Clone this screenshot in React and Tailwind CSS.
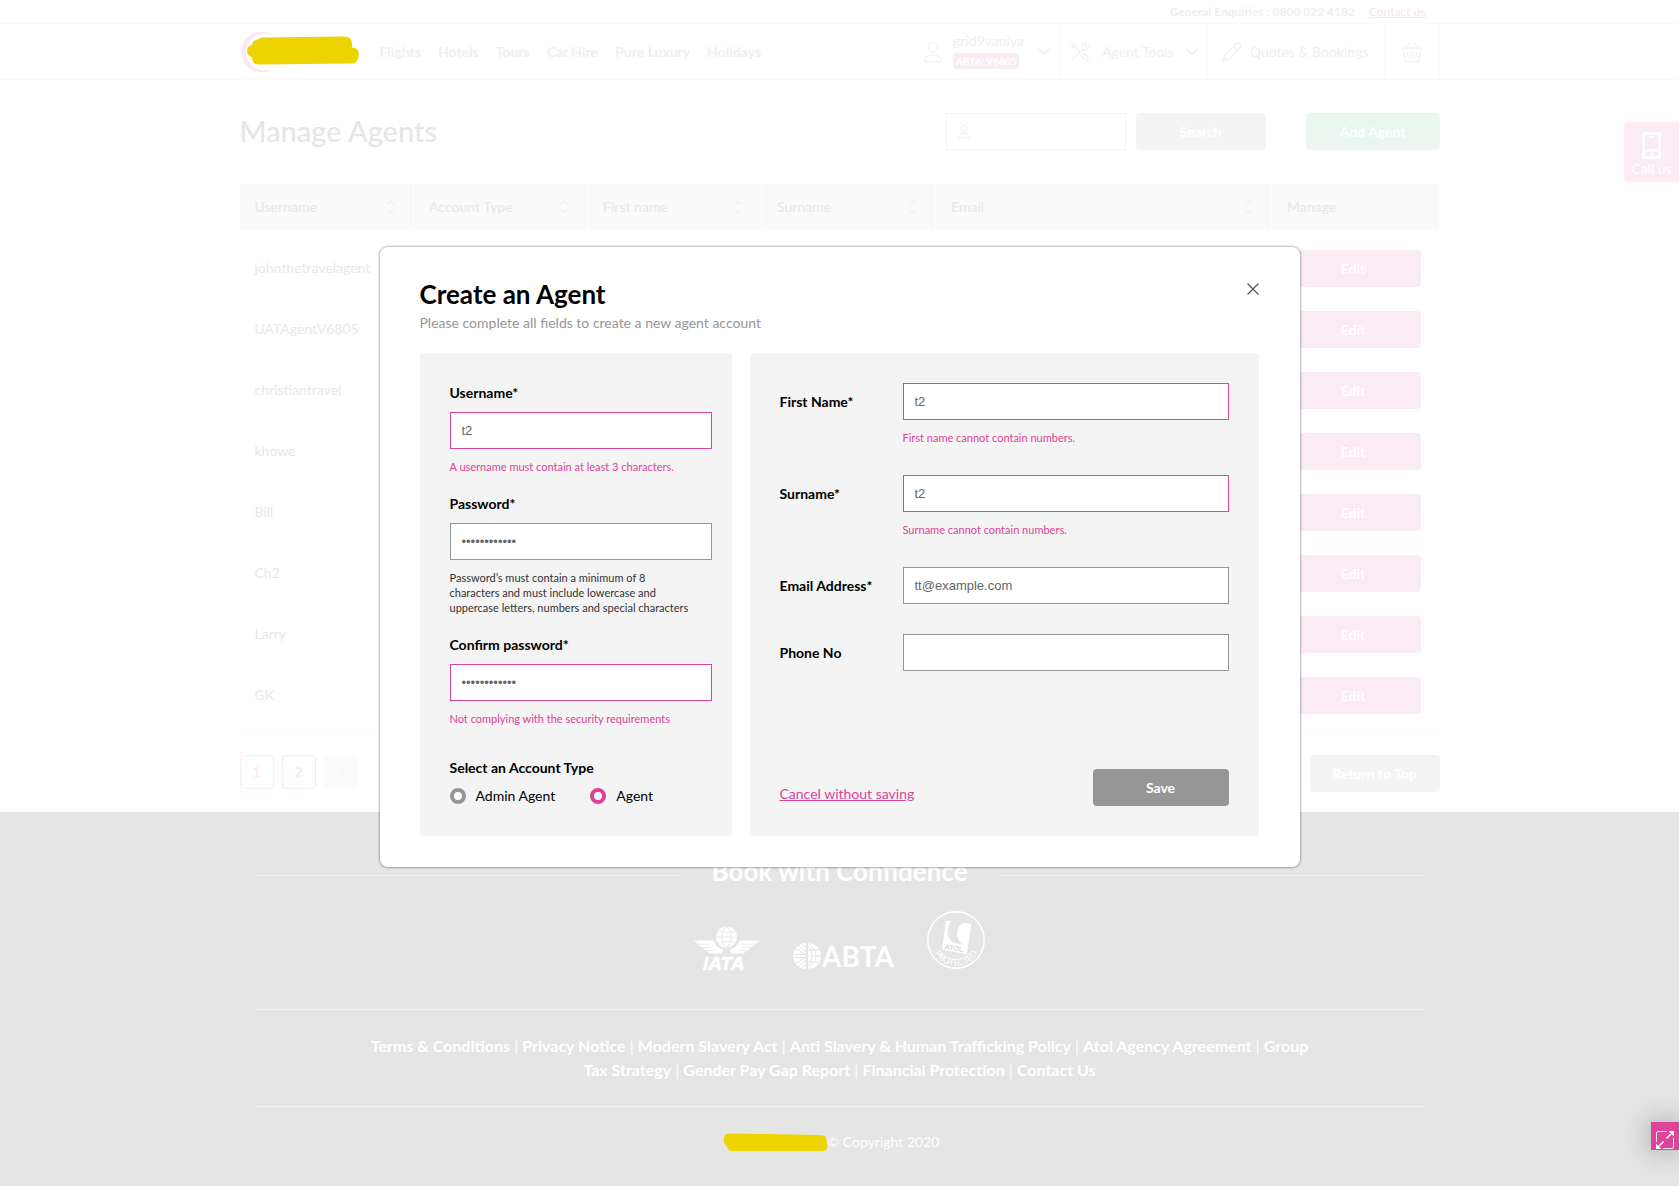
import React from "react";

const NAV = ["Flights", "Hotels", "Tours", "Car Hire", "Pure Luxury", "Holidays"];
const AGENTS = ["johnthetravelagent", "UATAgentV6805", "christiantravel", "khowe", "Bill", "Ch2", "Larry", "GK"];
const COLUMNS = [
  { name: "Username", width: "w-[174px]", sort: true },
  { name: "Account Type", width: "w-[174px]", sort: true },
  { name: "First name", width: "w-[174px]", sort: true },
  { name: "Surname", width: "w-[174px]", sort: true },
  { name: "Email", width: "w-[336px]", sort: true },
  { name: "Manage", width: "w-[168px]", sort: false },
];
const LINKS = [
  "Terms & Conditions",
  "Privacy Notice",
  "Modern Slavery Act",
  "Anti Slavery & Human Trafficking Policy",
  "Atol Agency Agreement",
  "Group Tax Strategy",
  "Gender Pay Gap Report",
  "Financial Protection",
  "Contact Us",
];

function UserIcon({ className }) {
  return (
    <svg viewBox="0 0 20 22" className={className} fill="none" stroke="currentColor" strokeWidth="1.6" aria-hidden="true">
      <ellipse cx="10" cy="6" rx="4.6" ry="5" />
      <path d="M1.5 20.6 C2 15.5 6 14 10 14 C14 14 18 15.5 18.5 20.6 Z" />
    </svg>
  );
}

function ChevronDown() {
  return (
    <svg viewBox="0 0 12 8" className="h-2 w-3 text-[#fae8f2]" fill="none" stroke="currentColor" strokeWidth="2" aria-hidden="true">
      <path d="M1 1.2 L6 6.2 L11 1.2" />
    </svg>
  );
}

function SortIcon() {
  return (
    <svg viewBox="0 0 9 14" className="h-3.5 w-[9px] text-[#e9e9e9]" fill="none" stroke="currentColor" strokeWidth="1" aria-hidden="true">
      <path d="M1 4.5 L4.5 1 L8 4.5 M1 9.5 L4.5 13 L8 9.5" />
    </svg>
  );
}

function ToolsIcon() {
  return (
    <svg viewBox="0 0 20 20" className="size-5 text-[#f4f4f4]" fill="none" stroke="currentColor" strokeWidth="1.5" strokeLinecap="round" aria-hidden="true">
      <path d="M5 5 L10 10 M1.500 3.500 L3.500 1.500 L5.600 3 L5.600 5.600 L3 5.600 Z" />
      <path d="M2 18 L13 7.500 M18.800 4 A3.400 3.400 0 1 1 16 1.200 L15.200 4.600 Z" />
      <path d="M11.500 13.500 L14 11.200 L18 15.500 Q19 17.500 17.500 18.500 Q16.200 19 15 17.800 Z" />
    </svg>
  );
}

function PencilIcon() {
  return (
    <svg viewBox="0 0 20 20" className="size-5 text-[#f3f3f3]" fill="none" stroke="currentColor" strokeWidth="1.6" strokeLinejoin="round" aria-hidden="true">
      <path d="M1 19 L2.4 13.6 L14.4 1.8 C15.6 0.7 16.8 0.8 18 2 C19.2 3.2 19.3 4.4 18.2 5.6 L6.4 17.6 Z" />
      <path d="M12 4.4 L15.6 8" />
      <path d="M1 19 L2 15 L5 18 Z" fill="currentColor" />
    </svg>
  );
}

function BasketIcon() {
  return (
    <svg viewBox="0 0 22 22" className="size-[22px] text-[#f4f4f4]" fill="none" stroke="currentColor" strokeWidth="1.6" aria-hidden="true">
      <path d="M0.5 7 H21.5" strokeWidth="2.4" />
      <path d="M2.2 8.5 L4.2 20.6 H17.8 L19.8 8.5 M4.5 6.5 L8.5 1 M17.5 6.5 L13.5 1" />
      <path d="M6.500 11 L7.2 17.5 M9.600 11 L9.800 17.500 M12.400 11 L12.200 17.5 M15.500 11 L14.8 17.5" strokeWidth="1" />
    </svg>
  );
}

function BrandMark() {
  return (
    <svg viewBox="0 0 120 44" className="h-11 w-[120px]" role="img" aria-label="Company logo">
      <path d="M36 7.800 A20.300 20.300 0 1 0 36 36.200 A18.400 18.400 0 1 1 36 7.800 Z" fill="#fae8f2" />
      <path
        d="M23 7.500 L105 6.500 Q112 7 112 14 L112 17.500 Q118.500 17.500 119 24 Q118 33 112.500 33.500 L18 34.500 Q12 34 12 27 Q7 26 7 21 Q7 16 12 15 Q13 9.500 18 9.500 Q20 7.500 23 7.500 Z"
        fill="#edd400"
      />
    </svg>
  );
}

function IataLogo() {
  return (
    <svg viewBox="0 0 66 44" className="h-11 w-[66px] overflow-visible" role="img" aria-label="IATA">
      <circle cx="32.500" cy="11" r="10.500" fill="#fff" />
      <g fill="none" stroke="#e5e5e5" strokeWidth="0.900">
        <ellipse cx="32.500" cy="11" rx="4.500" ry="10" />
        <path d="M22.500 11 H42.500 M24.500 5.500 Q32.500 8 40.500 5.500 M24.500 16.500 Q32.500 14 40.500 16.500" />
      </g>
      <g fill="#fff">
        <path d="M0 14.500 H19 L22 19 Q24 22 29 24 L28 27.500 H15 L13 25 H20 V24.200 H11 L8.500 21.800 H18 V21 H7 L4.500 18.500 H17 V17.700 H3.500 Z" />
        <path d="M66 14.500 H46 L43 19 Q41 22 36 24 L37 27.500 H50 L52 25 H45 V24.200 H54 L56.500 21.800 H47 V21 H58 L60.500 18.500 H48 V17.700 H61.500 Z" />
      </g>
      <text x="9" y="43.500" fontFamily="Liberation Sans" fontWeight="700" fontStyle="italic" fontSize="19" fill="#fff" stroke="#fff" strokeWidth="0.600">
        IATA
      </text>
    </svg>
  );
}

function AbtaLogo() {
  return (
    <svg viewBox="0 0 100 28" className="h-7 w-[100px] overflow-visible" role="img" aria-label="ABTA">
      <path d="M13 1 A13 13 0 0 0 13 27 Z M15 1 A13 13 0 0 1 15 27 Z" fill="#fff" />
      <g stroke="#e5e5e5" strokeWidth="1" fill="none">
        <path d="M0 12.500 H13 M0 15.500 H13 M2 6 L13 12.500 M5 3 L13 10 M9 1.500 L13 6 M2 22 L13 15.500 M5 25 L13 18 M9 26.500 L13 22" />
        <path d="M15 14 H28 M15 8 H26 M15 20 H26 M15 1 Q23 8 23 14 Q23 20 15 27 M15 4 Q19 9 19 14 Q19 19 15 24" />
      </g>
      <text x="29" y="25" fontFamily="Lato" fontWeight="700" fontSize="28" fill="#fff">
        ABTA
      </text>
    </svg>
  );
}

function AtolLogo() {
  return (
    <svg viewBox="0 0 60 60" className="size-[60px]" role="img" aria-label="ATOL Protected">
      <circle cx="30" cy="30" r="28.200" fill="none" stroke="#fff" strokeWidth="1.600" />
      <path d="M20 11 H25.500 Q21.500 16 21.500 22 Q21.500 29 28 33 L42 35.500 L41 44.500 L16 39.500 Z" fill="#fff" />
      <path d="M37.500 13 L45.500 14 L42 36 L37.500 34.800 Q31 31 31 24 Q31 16 37.500 13 Z" fill="#fff" />
      <text x="18.500" y="39" transform="rotate(9 18.500 39)" fontFamily="Liberation Sans" fontWeight="700" fontSize="7" fill="#d8d8d8">
        ATOL
      </text>
      <path id="atol-arc" d="M4.500 30 A25.500 25.500 0 0 0 55.500 30" fill="none" />
      <text fontFamily="Lato" fontSize="9" fill="#fff">
        <textPath href="#atol-arc" startOffset="50%" textAnchor="middle">
          PROTECTED
        </textPath>
      </text>
    </svg>
  );
}

function Header() {
  return (
    <header className="text-[#efefef]">
      <div className="border-b border-[#f9f9f9]">
        <div className="mx-auto flex h-[23px] max-w-[1200px] items-center justify-end gap-3.5 pr-3.5 text-xs">
          <span className="font-bold">General Enquiries : 0800 022 4182</span>
          <a href="#contact" className="text-[#fae3f0] underline">Contact us</a>
        </div>
      </div>
      <div className="border-b border-[#f9f9f9]">
        <div className="mx-auto flex h-[55px] max-w-[1200px] items-center justify-between text-sm">
          <div className="flex items-center gap-5">
            <a href="#home"><BrandMark /></a>
            <nav className="flex gap-[17px] font-bold">
              {NAV.map((n) => (
                <a key={n} href="#nav">{n}</a>
              ))}
            </nav>
          </div>
          <div className="flex h-full items-stretch">
            <button type="button" className="flex items-center gap-2.5 border-r border-[#f9f9f9] pr-2.5">
              <UserIcon className="h-[22px] w-5 text-[#f4f4f4]" />
              <span className="flex w-[75px] flex-col items-start gap-[3px] pb-0.5">
                <span className="leading-[18px]">grid9vaniya</span>
                <span className="rounded bg-[#faebf5] px-[3px] text-[10px] leading-4 font-bold text-white">ABTA: V6805</span>
              </span>
              <ChevronDown />
            </button>
            <button type="button" className="flex items-center gap-3 border-r border-[#f9f9f9] px-[9px]">
              <ToolsIcon />
              <span>Agent Tools</span>
              <ChevronDown />
            </button>
            <a href="#quotes" className="flex items-center gap-2 border-r border-[#f9f9f9] pr-[15px] pl-3.5">
              <PencilIcon />
              Quotes &amp; Bookings
            </a>
            <a href="#basket" aria-label="Basket" className="flex items-center border-r border-[#f9f9f9] px-4">
              <BasketIcon />
            </a>
          </div>
        </div>
      </div>
    </header>
  );
}

function AgentsPage() {
  return (
    <main className="mx-auto w-full max-w-[1200px] pb-5">
      <div className="flex items-center pt-[33px]">
        <h1 className="flex-1 pb-0.5 text-[29px] leading-[34px] font-medium text-[#e6e6e6]">Manage Agents</h1>
        <label className="flex h-[37px] w-[180px] items-center gap-2 border border-[#f3f3f3] px-[11px]">
          <UserIcon className="h-[15px] w-3.5 text-[#fae3f0]" />
          <input type="text" aria-label="Search agents" className="w-full outline-none" />
        </label>
        <button type="button" className="ml-2.5 h-[37px] w-[130px] rounded bg-[#f4f4f4] text-sm font-bold text-white">Search</button>
        <button type="button" className="ml-10 h-[37px] w-[134px] rounded bg-[#e9f7f0] text-sm font-bold text-white">Add Agent</button>
      </div>

      <table className="mt-[34px] w-full table-fixed border-b border-[#fafafa] text-left text-sm text-[#e8e8e8]">
        <thead>
          <tr>
            {COLUMNS.map((c) => (
              <th key={c.name} scope="col" className={"h-[45px] border-r border-white bg-[#fafafa] pr-[18px] pl-[15px] font-medium " + c.width}>
                <span className="flex items-center justify-between">
                  {c.name}
                  {c.sort && <SortIcon />}
                </span>
              </th>
            ))}
          </tr>
        </thead>
        <tbody className="before:block before:h-[9px] after:block after:h-[7px]">
          {AGENTS.map((a) => (
            <tr key={a} className="h-[61px]">
              <td className="pb-0.5 pl-[15px]">{a}</td>
              <td colSpan={4} />
              <td className="pl-3.5">
                <button type="button" className="h-[37px] w-[135px] rounded bg-[#faebf5] font-bold text-white">Edit</button>
              </td>
            </tr>
          ))}
        </tbody>
      </table>

      <div className="mt-[21px] flex items-start justify-between text-sm font-bold">
        <div className="flex gap-2">
          <button type="button" className="size-[34px] rounded border border-[#fae8f2] text-[#fae8f2]">1</button>
          <button type="button" className="size-[34px] rounded border border-[#fae8f2] text-[#fae8f2]">2</button>
          <button type="button" disabled className="size-[34px] rounded bg-[#fbfbfb] text-[#f8f8f8]">3</button>
        </div>
        <button type="button" className="h-[37px] w-[130px] rounded bg-[#f4f4f4] text-white">Return to Top</button>
      </div>
    </main>
  );
}

function Footer() {
  return (
    <footer className="flex-1 bg-[#e5e5e5] pt-[41px] text-white">
      <div className="mx-auto max-w-[1168px]">
        <div className="flex items-center gap-[30px]">
          <span className="h-px flex-1 bg-[#f2f2f2]" />
          <h2 className="pb-2 text-[26px] leading-9 font-bold">Book with Confidence</h2>
          <span className="h-px flex-1 bg-[#f2f2f2]" />
        </div>
        <div className="mt-[13px] flex items-end justify-center gap-[33px] border-b border-[#f2f2f2] pb-[39px]">
          <IataLogo />
          <AbtaLogo />
          <AtolLogo />
        </div>
        <div className="border-b border-[#f2f2f2] px-[110px] pt-6 pb-6 text-center text-base leading-6">
          {LINKS.map((l, i) => (
            <React.Fragment key={l}>
              {i > 0 && " | "}
              <a href="#link" className="font-bold">{l}</a>
            </React.Fragment>
          ))}
        </div>
        <div className="flex items-center justify-center pt-[25px] pr-[17px] pb-7 text-sm">
          <svg viewBox="0 0 105 19" className="h-[19px] w-[105px]" aria-hidden="true">
            <path d="M5 0.500 L98 2 Q102 2 103 5 L104.500 13 Q104 17 101 18 L9 18 Q5 18 3.500 13 Q1 11 0.500 7 Q1 1 5 0.500 Z" fill="#edd400" />
          </svg>
          <p>© Copyright 2020</p>
        </div>
      </div>
    </footer>
  );
}

function TextBox({ id, type = "text", value, invalid }) {
  return (
    <input
      id={id}
      type={type}
      defaultValue={value}
      aria-invalid={invalid ? "true" : undefined}
      className={
        "block h-[37px] w-full border bg-white px-[11px] font-['Liberation_Sans',sans-serif] text-[13px] text-[#666] outline-none " +
        (invalid ? "border-[#dc4399]" : "border-[#969696]")
      }
    />
  );
}

function Message({ children }) {
  return <p className="mt-2.5 text-[11px] leading-[15px] text-[#dc4399]">{children}</p>;
}

function StackedLabel({ htmlFor, children }) {
  return <label htmlFor={htmlFor} className="mb-[9px] block text-sm leading-5 font-bold">{children}</label>;
}

function Row({ id, label, children }) {
  return (
    <div className="flex items-start">
      <label htmlFor={id} className="w-[123px] shrink-0 text-sm leading-[37px] font-bold">{label}</label>
      <div className="flex-1">{children}</div>
    </div>
  );
}

const RADIO = "size-4 appearance-none rounded-full border-4 border-[#969696] bg-white checked:border-[#dc4399]";

function CreateAgentDialog() {
  return (
    <div className="absolute inset-x-0 top-[247px] flex justify-center">
      <form
        role="dialog"
        aria-labelledby="dialog-title"
        className="w-full max-w-[920px] rounded-lg bg-white pt-7 pr-[41px] pb-[31px] pl-10 shadow-[0_0_2px_1px_rgba(0,0,0,0.3)]"
      >
        <div className="flex items-start justify-between">
          <div>
            <h2 id="dialog-title" className="text-[26px] leading-[38px] font-bold">Create an Agent</h2>
            <p className="text-sm leading-5 text-[#969696]">Please complete all fields to create a new agent account</p>
          </div>
          <button type="button" aria-label="Close" className="mt-2">
            <svg viewBox="0 0 12 12" className="size-3" fill="none" stroke="#555" strokeWidth="1.200">
              <path d="M0.500 0.500 L11.500 11.500 M11.500 0.500 L0.500 11.500" />
            </svg>
          </button>
        </div>
        <div className="mt-5 flex gap-[18px]">
          <section className="w-[312px] rounded bg-[#f4f4f4] pt-[30px] pr-5 pb-[30px] pl-[30px]">
            <StackedLabel htmlFor="username">Username*</StackedLabel>
            <TextBox id="username" value="t2" invalid />
            <Message>A username must contain at least 3 characters.</Message>
            <div className="mt-5">
              <StackedLabel htmlFor="password">Password*</StackedLabel>
              <TextBox id="password" type="password" value="Password123!" />
              <p className="mt-2.5 text-[11px] leading-[15px] text-[#333]">
                Password’s must contain a minimum of 8<br />
                characters and must include lowercase and<br />
                uppercase letters, numbers and special characters
              </p>
            </div>
            <div className="mt-5">
              <StackedLabel htmlFor="confirm">Confirm password*</StackedLabel>
              <TextBox id="confirm" type="password" value="Password123!" invalid />
              <Message>Not complying with the security requirements</Message>
            </div>
            <fieldset className="mt-8">
              <legend className="text-sm leading-5 font-bold">Select an Account Type</legend>
              <div className="mt-2 flex gap-[35px] text-sm leading-5">
                <label className="flex items-center gap-2.5">
                  <input type="radio" name="account" className={RADIO} />
                  Admin Agent
                </label>
                <label className="flex items-center gap-2.5">
                  <input type="radio" name="account" defaultChecked className={RADIO} />
                  Agent
                </label>
              </div>
            </fieldset>
          </section>
          <section className="flex flex-1 flex-col rounded bg-[#f4f4f4] p-[30px]">
            <Row id="first" label="First Name*">
              <TextBox id="first" value="t2" invalid />
              <Message>First name cannot contain numbers.</Message>
            </Row>
            <div className="mt-[30px]">
              <Row id="surname" label="Surname*">
                <TextBox id="surname" value="t2" invalid />
                <Message>Surname cannot contain numbers.</Message>
              </Row>
            </div>
            <div className="mt-[30px]">
              <Row id="email" label="Email Address*">
                <TextBox id="email" type="email" value="tt@example.com" />
              </Row>
            </div>
            <div className="mt-[30px]">
              <Row id="phone" label="Phone No">
                <TextBox id="phone" type="tel" />
              </Row>
            </div>
            <div className="mt-auto flex items-end justify-between">
              <a href="#cancel" className="text-sm leading-6 text-[#dc4399] underline">Cancel without saving</a>
              <button type="submit" className="h-[37px] w-[136px] rounded bg-[#969696] text-sm font-bold text-white">Save</button>
            </div>
          </section>
        </div>
      </form>
    </div>
  );
}

export default function App() {
  return (
    <div className="relative flex min-h-screen flex-col overflow-hidden bg-white font-['Lato',sans-serif] text-black">
      <Header />
      <AgentsPage />
      <Footer />
      <button type="button" className="absolute top-[122px] right-0 flex h-[60px] w-[55px] flex-col items-center rounded-l bg-[#faebf5] pt-2.5 text-sm text-white">
        <svg viewBox="0 0 19 27" className="h-[27px] w-[19px] shrink-0" fill="none" stroke="#fff" strokeWidth="2.500" aria-hidden="true">
          <path d="M1.500 1.500 H17.500 V25.500 H1.500 Z M1.500 18.500 H17.500" />
          <path d="M6.500 5 H12.500" strokeWidth="1.800" />
          <circle cx="9.500" cy="22" r="1.500" fill="#fff" stroke="none" />
        </svg>
        Call us
      </button>
      <CreateAgentDialog />
      <button type="button" aria-label="Expand" className="absolute right-0 bottom-9 flex size-7 items-end bg-[#dc4399] pl-[5px] pb-px shadow-[0_0_30px_rgba(0,0,0,0.35)]">
        <svg viewBox="0 0 18 18" className="size-[18px] shrink-0" fill="none" stroke="#fff" aria-hidden="true">
          <path d="M11 0.500 H2 Q0.500 0.500 0.500 2 V11 M7 17.500 H16 Q17.500 17.500 17.500 16 V7" strokeWidth="0.900" />
          <path d="M3 15 L7.500 10.500 M10.500 7.500 L15 3" strokeWidth="1.600" />
          <path d="M18 0 V5.500 L12.500 0 Z M0 18 V12.500 L5.500 18 Z" fill="#fff" stroke="none" />
        </svg>
      </button>
    </div>
  );
}
